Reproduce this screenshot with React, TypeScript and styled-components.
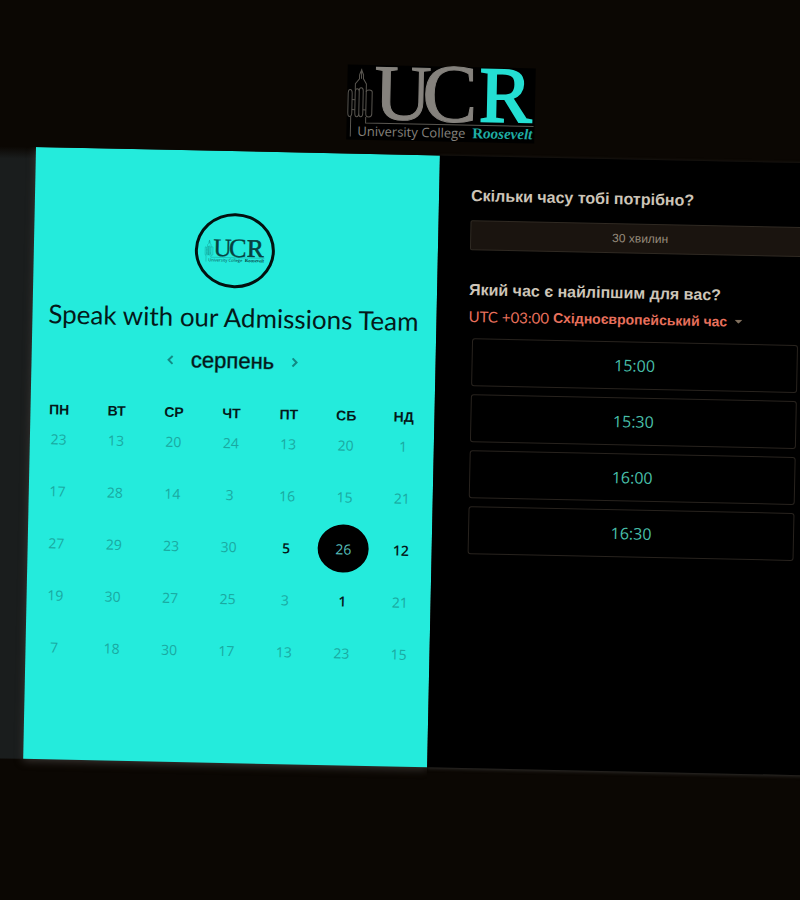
import React, { useState } from "react";
import styled, { createGlobalStyle } from "styled-components";

const GlobalStyle = createGlobalStyle`
  *, *::before, *::after { box-sizing: border-box; }
  html, body { margin: 0; background: #0b0703; }
  body { font-family: "Open Sans", "Liberation Sans", sans-serif; overflow: hidden; }
  button, select { font: inherit; }
`;

const Page = styled.main`
  min-height: 100vh;
  overflow: hidden;
  background: #0b0703;
`;

/* The booking sheet is shown slightly tilted around the corner of the card. */
const Stage = styled.div`
  transform: rotate(1.2deg);
  transform-origin: 36px 147px;
`;

const Header = styled.header`
  display: flex;
  justify-content: center;
  margin: 0 -44px 0 36px;
  padding: 58px 0 14px;
`;

const HeaderLogo = styled.div`
  width: 188px;
  height: 75px;
  background: #000;
`;

const Row = styled.div`
  display: grid;
  grid-template-columns: 60px minmax(0, 1fr) minmax(0, 1fr);
  margin: 0 -44px 0 -24px;
`;

const Gutter = styled.div`
  background: linear-gradient(#0b0703, #1a1d1d 12px);
`;

const CalendarPanel = styled.section`
  position: relative;
  z-index: 1;
  display: flex;
  flex-direction: column;
  align-items: center;
  padding: 62px 2px 87px 0;
  background: #24ebdc;
  color: #04191a;
  box-shadow: 0 2px 8px #3a3633;
  clip-path: inset(0 0 -16px -16px);
`;

const Avatar = styled.div`
  display: flex;
  align-items: center;
  justify-content: center;
  width: 80px;
  height: 75px;
  border: 3px solid #03100f;
  border-radius: 50%;
`;

const AvatarLogo = styled.div`
  width: 60px;
  height: 24px;
`;

const Title = styled.h1`
  margin: 11px 0 0;
  font: 400 26px/36px Lato, sans-serif;
  white-space: nowrap;
`;

const MonthNav = styled.div`
  display: flex;
  align-items: center;
  gap: 10px;
  margin-top: 12px;
`;

const Month = styled.h2`
  margin: 0;
  font: 400 22px/28px "Liberation Sans", sans-serif;
  -webkit-text-stroke: 1px #04191a66;
`;

const ArrowButton = styled.button`
  display: flex;
  align-items: center;
  justify-content: center;
  width: 20px;
  height: 24px;
  padding: 0;
  border: 0;
  background: none;
  color: #128a84;
`;

const Dates = styled.table`
  width: 100%;
  margin-top: 35px;
  table-layout: fixed;
  border-collapse: collapse;

  td { height: 52px; padding: 0; text-align: center; }
`;

const Weekday = styled.th`
  padding: 0;
  font: 700 14px/6px "Liberation Sans", sans-serif;
`;

type DayState = "past" | "open" | "selected";

const Day = styled.button<{ $state: DayState }>`
  width: 51px;
  height: 48px;
  padding: 0;
  border: 0;
  border-radius: 50%;
  vertical-align: middle;
  background: ${(p) => (p.$state === "selected" ? "#000" : "transparent")};
  color: ${(p) =>
    p.$state === "selected" ? "#56bcb8" : p.$state === "open" ? "#04191a" : "#1aa9a1"};
  font-size: 14px;
  font-weight: ${(p) => (p.$state === "open" ? 600 : 400)};
`;

const TimePanel = styled.section`
  padding: 30px 32px;
  background: #000;
  box-shadow: 0 1px 4px #33312e;
`;

const Question = styled.h2`
  margin: 0;
  color: #cdc5b8;
  font: 700 16px/20px "Liberation Sans", sans-serif;
`;

const Duration = styled.button`
  display: block;
  width: 100%;
  height: 30px;
  margin: 14px 0 30px;
  padding: 0;
  border: 1px solid #302a23;
  border-radius: 2px;
  background: #1a140f;
  color: #968b7b;
  font: 400 12px/16px "Liberation Sans", sans-serif;
`;

const ZoneButton = styled.button`
  display: flex;
  align-items: center;
  gap: 4px;
  margin: 4px 0 0;
  padding: 0;
  border: 0;
  background: none;
  color: #e8705c;
  font: 400 15px/24px Lato, sans-serif;
  white-space: nowrap;
`;

const ZoneName = styled.span`
  font: 700 14px/24px "Liberation Sans", sans-serif;
`;

const Caret = styled.svg`
  width: 8px;
  height: 4px;
  margin-left: 3px;
  fill: #81705e;
`;

const Slots = styled.div`
  display: grid;
  gap: 8px;
  margin: 10px 10px 0 4px;
`;

const Slot = styled.button`
  height: 48px;
  padding: 0;
  border: 1px solid #28231e;
  border-radius: 3px;
  background: #000;
  color: #48bfa9;
  font-size: 16px;
`;

const LogoArt = styled.svg`
  display: block;
  width: 100%;
  height: 100%;
  overflow: visible;
`;

function Logo({ letters, accent, line, word }: { letters: string; accent: string; line: string; word: string }) {
  return (
    <LogoArt viewBox="0 0 188 75" role="img" aria-label="University College Roosevelt">
      <g fill="none" stroke={line} strokeWidth="1">
        <path d="M14 4v10M12 10l2-5 2 5v4l3 5v8M12 10v4l-4 5v6" />
        <path d="M1 29q0-4 2-4t2 4v19q0 4-2 4t-2-4zM8 27q0-3 2-3t2 3v21q0 4-2 4t-2-4zM12 26q0-3 2-3t2 3v22q0 4-2 4t-2-4zM19 27q0-2 3-2t3 2v22q0 3-3 3t-3-3z" />
        <path d="M5 35h3M5 45h3M16 45h3M4 52v20M19 52v6h168" />
      </g>
      <g fontFamily="Liberation Serif, serif" fontSize="79" strokeWidth="1">
        <text x="27" y="54" fill={letters} stroke={letters}>U</text>
        <text x="75" y="55" fill={letters} stroke={letters} fontSize="83">C</text>
        <text x="132" y="54" fill={accent} stroke={accent} strokeWidth="2">R</text>
      </g>
      <text x="11" y="71" fill={letters} fontFamily="Open Sans, sans-serif" fontSize="13">University College</text>
      <text x="126" y="71" fill={word} fontFamily="Liberation Serif, serif" fontSize="15" fontWeight="700">
        R<tspan fontStyle="italic">oosevelt</tspan>
      </text>
    </LogoArt>
  );
}

const WEEKDAYS = ["ПН", "ВТ", "СР", "ЧТ", "ПТ", "СБ", "НД"];
const WEEKS = [
  [23, 13, 20, 24, 13, 20, 1],
  [17, 28, 14, 3, 16, 15, 21],
  [27, 29, 23, 30, 5, 26, 12],
  [19, 30, 27, 25, 3, 1, 21],
  [7, 18, 30, 17, 13, 23, 15],
];
const OPEN_DAYS = ["2-4", "2-5", "2-6", "3-5"];
const TIMES = ["15:00", "15:30", "16:00", "16:30"];

export default function App() {
  const [selected, setSelected] = useState("2-5");

  return (
    <>
      <GlobalStyle />
      <Page>
        <Stage>
          <Header>
            <HeaderLogo>
              <Logo letters="#85827d" accent="#24dfd3" line="#595650" word="#1fada4" />
            </HeaderLogo>
          </Header>
          <Row>
            <Gutter />
            <CalendarPanel>
              <Avatar>
                <AvatarLogo>
                  <Logo letters="#07403f" accent="#07403f" line="#0d7772" word="#07403f" />
                </AvatarLogo>
              </Avatar>
              <Title>Speak with our Admissions Team</Title>
              <MonthNav>
                <ArrowButton aria-label="Попередній місяць">
                  <svg width="8" height="10" viewBox="0 0 8 10" fill="none" stroke="currentColor" strokeWidth="2">
                    <path d="M6 1L2 5l4 4" />
                  </svg>
                </ArrowButton>
                <Month>серпень</Month>
                <ArrowButton aria-label="Наступний місяць">
                  <svg width="8" height="10" viewBox="0 0 8 10" fill="none" stroke="currentColor" strokeWidth="2">
                    <path d="M2 1l4 4-4 4" />
                  </svg>
                </ArrowButton>
              </MonthNav>
              <Dates>
                <thead>
                  <tr>
                    {WEEKDAYS.map((d) => (
                      <Weekday key={d} scope="col">{d}</Weekday>
                    ))}
                  </tr>
                </thead>
                <tbody>
                  {WEEKS.map((week, w) => (
                    <tr key={w}>
                      {week.map((day, d) => {
                        const id = `${w}-${d}`;
                        const open = OPEN_DAYS.includes(id);
                        const state: DayState = id === selected ? "selected" : open ? "open" : "past";
                        return (
                          <td key={id}>
                            <Day $state={state} disabled={!open} onClick={() => setSelected(id)}>
                              {day}
                            </Day>
                          </td>
                        );
                      })}
                    </tr>
                  ))}
                </tbody>
              </Dates>
            </CalendarPanel>
            <TimePanel>
              <Question>Скільки часу тобі потрібно?</Question>
              <Duration>30 хвилин</Duration>
              <Question>Який час є найліпшим для вас?</Question>
              <ZoneButton>
                UTC +03:00 <ZoneName>Східноєвропейський час</ZoneName>
                <Caret viewBox="0 0 8 4" aria-hidden="true">
                  <path d="M0 0h8L4 4z" />
                </Caret>
              </ZoneButton>
              <Slots>
                {TIMES.map((t) => (
                  <Slot key={t}>{t}</Slot>
                ))}
              </Slots>
            </TimePanel>
          </Row>
        </Stage>
      </Page>
    </>
  );
}
